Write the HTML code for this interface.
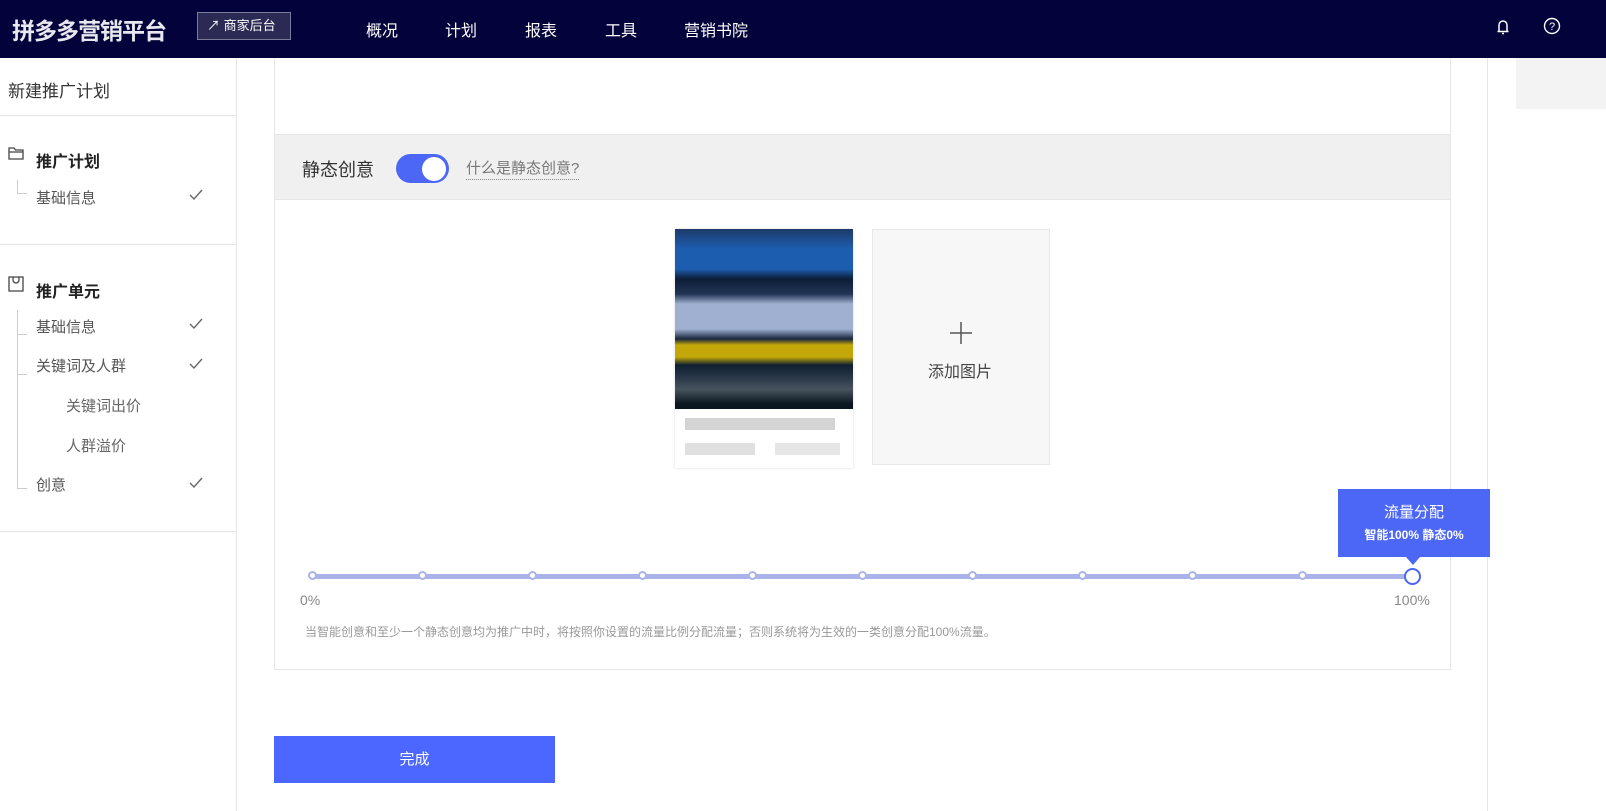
<!DOCTYPE html>
<html><head><meta charset="utf-8"><style>
*{margin:0;padding:0;box-sizing:border-box}
body{width:1606px;height:811px;overflow:hidden;background:#fff;font-family:"Liberation Sans","Noto Sans CJK SC",sans-serif;position:relative;color:#333}
.a{position:absolute}
.hdr{left:0;top:0;width:1606px;height:58px;background:#03023a}
.nav{color:#fff;font-size:16px;top:17px}
.side{left:0;top:58px;width:237px;height:753px;border-right:1px solid #e6e6e6}
.it{font-size:15px;color:#555}
.ck{left:189px}
.dot{width:9px;height:9px;border-radius:50%;background:#fff;border:2px solid #aab2ea;top:571px}
</style></head><body>
<div class="a hdr"></div>
<div class="a" style="left:12px;top:12px;color:#e8e8f0;font-size:23px;font-weight:bold;letter-spacing:-1px">拼多多营销平台</div>
<div class="a" style="left:197px;top:12px;width:94px;height:28px;border:1px solid #7a7a99;background:#2a2a55;color:#fff;font-size:13px;line-height:26px;padding-left:9px">↗ 商家后台</div>
<div class="a nav" style="left:366px">概况</div>
<div class="a nav" style="left:445px">计划</div>
<div class="a nav" style="left:525px">报表</div>
<div class="a nav" style="left:605px">工具</div>
<div class="a nav" style="left:684px">营销书院</div>
<svg class="a" style="left:1495px;top:18px" width="16" height="18" viewBox="0 0 16 18"><path d="M4 13V7a4 4 0 0 1 8 0v6M2.5 13.5h11M7 15.5h2" stroke="#fff" stroke-width="1.5" fill="none"/></svg>
<svg class="a" style="left:1543px;top:17px" width="18" height="18" viewBox="0 0 18 18"><circle cx="9" cy="9" r="7.5" stroke="#fff" stroke-width="1.4" fill="none"/><text x="9" y="13" font-size="11" fill="#fff" text-anchor="middle" font-family="Liberation Sans">?</text></svg>

<div class="a side"></div>
<div class="a" style="left:8px;top:77px;font-size:17px;color:#333">新建推广计划</div>
<div class="a" style="left:0;top:115px;width:237px;border-top:1px solid #e6e6e6"></div>
<div class="a" style="left:0;top:244px;width:237px;border-top:1px solid #e6e6e6"></div>
<div class="a" style="left:0;top:531px;width:237px;border-top:1px solid #e6e6e6"></div>
<svg class="a" style="left:8px;top:146px" width="16" height="14"><path d="M1 2h5l1.5 2H15v9H1zM1 6h14" stroke="#444" stroke-width="1.3" fill="none"/></svg>
<div class="a" style="left:36px;top:148px;font-size:16px;font-weight:bold;color:#222">推广计划</div>
<div class="a" style="left:17px;top:180px;width:10px;height:14px;border-left:1px solid #ccc;border-bottom:1px solid #ccc"></div>
<div class="a it" style="left:36px;top:187px">基础信息</div>
<svg class="a ck" style="top:189px" width="14" height="12"><path d="M1 6l4 4 8-9" stroke="#666" stroke-width="1.4" fill="none"/></svg>
<svg class="a" style="left:8px;top:276px" width="16" height="16"><path d="M1 1h14v14H1zM5 1v3a3 3 0 0 0 6 0V1" stroke="#444" stroke-width="1.3" fill="none"/></svg>
<div class="a" style="left:36px;top:278px;font-size:16px;font-weight:bold;color:#222">推广单元</div>
<div class="a" style="left:17px;top:310px;height:178px;border-left:1px solid #ccc"></div>
<div class="a" style="left:17px;top:334px;width:10px;border-top:1px solid #ccc"></div>
<div class="a" style="left:17px;top:374px;width:10px;border-top:1px solid #ccc"></div>
<div class="a" style="left:17px;top:488px;width:10px;border-top:1px solid #ccc"></div>
<div class="a it" style="left:36px;top:316px">基础信息</div>
<svg class="a ck" style="top:318px" width="14" height="12"><path d="M1 6l4 4 8-9" stroke="#666" stroke-width="1.4" fill="none"/></svg>
<div class="a it" style="left:36px;top:355px">关键词及人群</div>
<svg class="a ck" style="top:358px" width="14" height="12"><path d="M1 6l4 4 8-9" stroke="#666" stroke-width="1.4" fill="none"/></svg>
<div class="a it" style="left:66px;top:395px;color:#666">关键词出价</div>
<div class="a it" style="left:66px;top:435px;color:#666">人群溢价</div>
<div class="a it" style="left:36px;top:474px">创意</div>
<svg class="a ck" style="top:477px" width="14" height="12"><path d="M1 6l4 4 8-9" stroke="#666" stroke-width="1.4" fill="none"/></svg>

<div class="a" style="left:1487px;top:58px;height:753px;border-left:1px solid #e6e6e6"></div>
<div class="a" style="left:1516px;top:58px;width:90px;height:51px;background:#f3f3f3"></div>

<div class="a" style="left:274px;top:58px;width:1177px;height:612px;border:1px solid #e6e6e6;border-top:none"></div>
<div class="a" style="left:275px;top:134px;width:1175px;height:66px;background:#f0f0f0;border-top:1px solid #e6e6e6;border-bottom:1px solid #e6e6e6"></div>
<div class="a" style="left:302px;top:156px;font-size:18px;color:#333">静态创意</div>
<div class="a" style="left:396px;top:154px;width:53px;height:29px;border-radius:15px;background:#4c67f5"></div>
<div class="a" style="left:422px;top:157px;width:24px;height:24px;border-radius:50%;background:#fff"></div>
<div class="a" style="left:466px;top:157px;font-size:15px;color:#777;border-bottom:1px dotted #888;padding-bottom:1px">什么是静态创意?</div>

<div class="a" style="left:675px;top:229px;width:178px;height:239px;background:#fff;box-shadow:0 0 3px #ddd"></div>
<div class="a" style="left:675px;top:229px;width:178px;height:180px;background:linear-gradient(#1d3a6a 0,#1d5db0 20px,#1d5db0 40px,#0c1d36 50px,#223456 65px,#9fb0d0 75px,#9fb0d0 100px,#18263d 110px,#c4a80a 116px,#c4a80a 128px,#0f1f30 136px,#2c3a4a 150px,#48545e 160px,#0a1620 175px)"></div>
<div class="a" style="left:685px;top:418px;width:150px;height:12px;background:#d4d4d4"></div>
<div class="a" style="left:685px;top:443px;width:70px;height:12px;background:#e0e0e0"></div>
<div class="a" style="left:775px;top:443px;width:65px;height:12px;background:#e6e6e6"></div>
<div class="a" style="left:872px;top:229px;width:178px;height:236px;background:#f7f7f7;border:1px solid #e8e8e8"></div>
<svg class="a" style="left:950px;top:322px" width="22" height="22"><path d="M11 0v22M0 11h22" stroke="#555" stroke-width="1.5"/></svg>
<div class="a" style="left:928px;top:358px;font-size:16px;color:#444">添加图片</div>

<div class="a" style="left:312px;top:574px;width:1100px;height:5px;background:#aab2ea"></div>
<div class="a dot" style="left:308px"></div><div class="a dot" style="left:418px"></div><div class="a dot" style="left:528px"></div><div class="a dot" style="left:638px"></div><div class="a dot" style="left:748px"></div><div class="a dot" style="left:858px"></div><div class="a dot" style="left:968px"></div><div class="a dot" style="left:1078px"></div><div class="a dot" style="left:1188px"></div><div class="a dot" style="left:1298px"></div>
<div class="a" style="left:1404px;top:568px;width:17px;height:17px;border-radius:50%;background:#fff;border:2px solid #4c67f5"></div>
<div class="a" style="left:1338px;top:489px;width:152px;height:68px;background:#4c67f5;color:#fff;text-align:center"><div style="font-size:15px;margin-top:12px">流量分配</div><div style="font-size:12px;font-weight:bold;margin-top:4px">智能100% 静态0%</div></div>
<div class="a" style="left:1406px;top:557px;border-left:7px solid transparent;border-right:7px solid transparent;border-top:8px solid #4c67f5"></div>
<div class="a" style="left:300px;top:592px;font-size:14px;color:#888">0%</div>
<div class="a" style="left:1394px;top:592px;font-size:14px;color:#888">100%</div>
<div class="a" style="left:305px;top:623px;font-size:12px;color:#999">当智能创意和至少一个静态创意均为推广中时，将按照你设置的流量比例分配流量；否则系统将为生效的一类创意分配100%流量。</div>

<div class="a" style="left:274px;top:736px;width:281px;height:47px;background:#4c67ff;color:#fff;font-size:15px;text-align:center;line-height:47px">完成</div>
</body></html>
